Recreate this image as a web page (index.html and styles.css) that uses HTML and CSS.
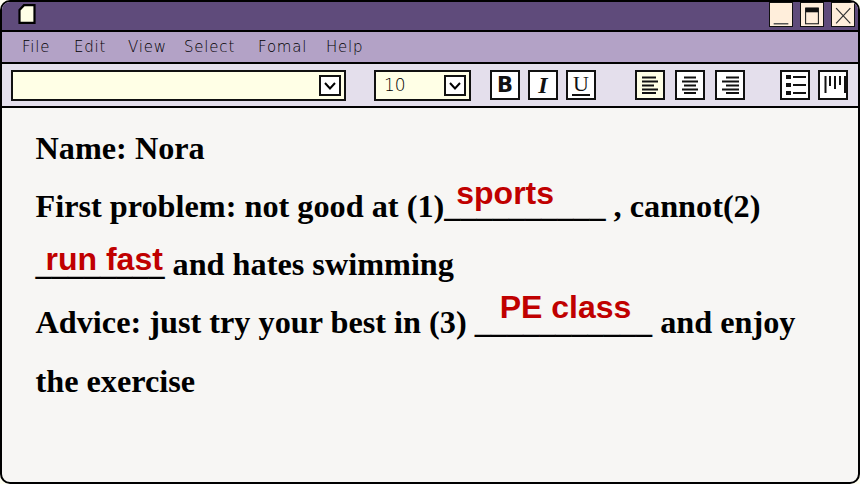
FILE: index.html
```html
<!DOCTYPE html>
<html lang="en">
<head>
<meta charset="utf-8">
<title>Nora</title>
<link rel="stylesheet" href="styles.css">
</head>
<body>
<main class="window">
  <header class="titlebar">
    <svg class="doc-icon" width="18" height="20" viewBox="0 0 18 20"><path d="M6 1.2H16.5V18.8H1.5V6Z" fill="#ffffe6" stroke="#000" stroke-width="2.2"/></svg>
    <div class="win-buttons">
      <button class="win-btn"><svg width="24" height="25" viewBox="0 0 24 25"><path d="M4 21.5H20" stroke="#555" stroke-width="1.4"/></svg></button>
      <button class="win-btn"><svg width="24" height="25" viewBox="0 0 24 25"><rect x="5" y="4.5" width="14" height="17" fill="none" stroke="#222" stroke-width="1.2"/><rect x="5" y="4" width="14" height="5" fill="#111"/></svg></button>
      <button class="win-btn"><svg width="24" height="25" viewBox="0 0 24 25"><path d="M4.5 4.5L20 21M20 4.5L4.5 21" stroke="#333" stroke-width="1.3"/></svg></button>
    </div>
  </header>
  <nav class="menubar">
    <span class="menu-item m-file">File</span>
    <span class="menu-item m-edit">Edit</span>
    <span class="menu-item m-view">View</span>
    <span class="menu-item m-select">Select</span>
    <span class="menu-item m-format">Fomal</span>
    <span class="menu-item">Help</span>
  </nav>
  <div class="toolbar">
    <div class="combo combo-font">
      <span class="combo-arrow"><svg width="14" height="10" viewBox="0 0 14 10"><path d="M2 2L7 7.5L12 2" fill="none" stroke="#000" stroke-width="2"/></svg></span>
    </div>
    <div class="combo combo-size">
      <span class="combo-value">10</span>
      <span class="combo-arrow"><svg width="14" height="10" viewBox="0 0 14 10"><path d="M2 2L7 7.5L12 2" fill="none" stroke="#000" stroke-width="2"/></svg></span>
    </div>
    <div class="tool-group group-style">
      <button class="tool tool-b">B</button>
      <button class="tool tool-i">I</button>
      <button class="tool tool-u"><span class="u-mark">U</span></button>
    </div>
    <div class="tool-group group-align">
      <button class="tool tool-active"><svg width="20" height="20" viewBox="0 0 20 20"><path d="M2 2.5H16M2 6.5H18M2 10.5H14M2 14.5H18M2 18H16" stroke="#111" stroke-width="1.8"/></svg></button>
      <button class="tool"><svg width="20" height="20" viewBox="0 0 20 20"><path d="M4 2.5H16M2 6.5H18M4 10.5H16M2 14.5H18M4 18H16" stroke="#111" stroke-width="1.8"/></svg></button>
      <button class="tool"><svg width="20" height="20" viewBox="0 0 20 20"><path d="M6 2.5H19M2 6.5H19M6 10.5H19M2 14.5H19M6 18H19" stroke="#111" stroke-width="1.8"/></svg></button>
    </div>
    <div class="tool-group group-list">
      <button class="tool"><svg width="26" height="26" viewBox="0 0 26 26"><path d="M11 5H24M11 13H24M11 21H24" stroke="#111" stroke-width="2"/><rect x="4" y="3" width="5" height="4" fill="#111"/><rect x="4" y="11" width="5" height="4" fill="#111"/><rect x="4" y="19" width="5" height="4" fill="#111"/></svg></button>
      <button class="tool"><svg width="26" height="26" viewBox="0 0 26 26"><path d="M5.5 4V21M10 4V14M15 4V17M20 4V13M25 4V21" stroke="#111" stroke-width="2"/></svg></button>
    </div>
  </div>
  <section class="doc">
    <p class="line">Name: Nora</p>
    <p class="line">First problem: not good at (1)<span class="blank">__________<span class="answer answer-1">sports</span></span> , cannot(2)</p>
    <p class="line"><span class="blank">________<span class="answer answer-2">run fast</span></span> and hates swimming</p>
    <p class="line">Advice: just try your best in (3) <span class="blank">___________<span class="answer answer-3">PE class</span></span> and enjoy</p>
    <p class="line">the exercise</p>
  </section>
</main>
</body>
</html>
```
FILE: styles.css
```css
* { box-sizing: border-box; }
html, body { margin: 0; padding: 0; }
body { width: 860px; height: 484px; background: #fffff2; overflow: hidden; }
button { padding: 0; margin: 0; font: inherit; }

.window {
  width: 860px;
  height: 484px;
  display: flex;
  flex-direction: column;
  border: 2px solid #000;
  border-radius: 10px;
  overflow: hidden;
  background: #f7f6f4;
}

.titlebar {
  height: 30px;
  flex: none;
  background: #5f4b7b;
  border-bottom: 2px solid #000;
  display: flex;
  justify-content: space-between;
  padding: 0 3px 0 16px;
}
.doc-icon { margin-top: 2px; }
.win-buttons { display: flex; gap: 7px; }
.win-btn {
  width: 24px;
  height: 25px;
  background: #ffeedb;
  border: 1px solid #111;
  display: flex;
}

.menubar {
  height: 32px;
  flex: none;
  background: #b3a2c6;
  border-bottom: 2px solid #000;
  display: flex;
  align-items: center;
  padding: 0 0 0 20px;
  font: 15px/1 "DejaVu Sans", sans-serif;
  font-weight: 200;
  color: #000;
}
.menu-item { letter-spacing: 0.8px; }
.m-file { width: 52px; }
.m-edit { width: 54px; }
.m-view { width: 56px; }
.m-select { width: 74px; }
.m-format { width: 68px; }

.toolbar {
  height: 44px;
  flex: none;
  background: #e4dfec;
  border-bottom: 2px solid #000;
  display: flex;
  padding: 6px 0 0 9px;
}
.combo {
  height: 31px;
  background: #ffffe6;
  border: 2px solid #111;
  display: flex;
  align-items: center;
  justify-content: space-between;
  padding-right: 3px;
}
.combo-font { width: 335px; margin-right: 28px; justify-content: flex-end; }
.combo-size { width: 97px; margin-right: 19px; padding-left: 8px; }
.combo-value { font: 17px/1 "DejaVu Sans", sans-serif; font-weight: 200; color: #000; }
.combo-arrow {
  width: 22px;
  height: 21px;
  background: #fff;
  border: 2px solid #111;
  display: flex;
  align-items: center;
  justify-content: center;
}
.tool-group { display: flex; gap: 8px; }
.group-style { margin-right: 39px; }
.group-align { gap: 10px; margin-right: 35px; }
.tool {
  width: 30px;
  height: 30px;
  background: #fff;
  border: 2px solid #111;
  display: flex;
  align-items: center;
  justify-content: center;
  color: #111;
}
.tool-active { background: #ffffe6; }
.tool-b { font: bold 21px/1 "DejaVu Sans", sans-serif; }
.tool-i { font: italic bold 24px/1 "Liberation Serif", serif; }
.tool-u { font: 22px/18px "Liberation Serif", serif; }
.u-mark { display: block; width: 18px; height: 21px; text-align: center; border-bottom: 2px solid #111; }

.doc {
  flex: 1;
  padding: 11px 0 0 33.5px;
  font: bold 32.25px/58.15px "Liberation Serif", serif;
  color: #000;
}
.line { margin: 0; white-space: nowrap; }
.blank { position: relative; }
.answer {
  position: absolute;
  top: -14px;
  font: bold 32px/1.2 "Liberation Sans", sans-serif;
  color: #c00000;
  white-space: nowrap;
}
.answer-1 { left: 12px; }
.answer-2 { left: 10px; top: -6px; }
.answer-3 { left: 25px; top: -16px; }
```
